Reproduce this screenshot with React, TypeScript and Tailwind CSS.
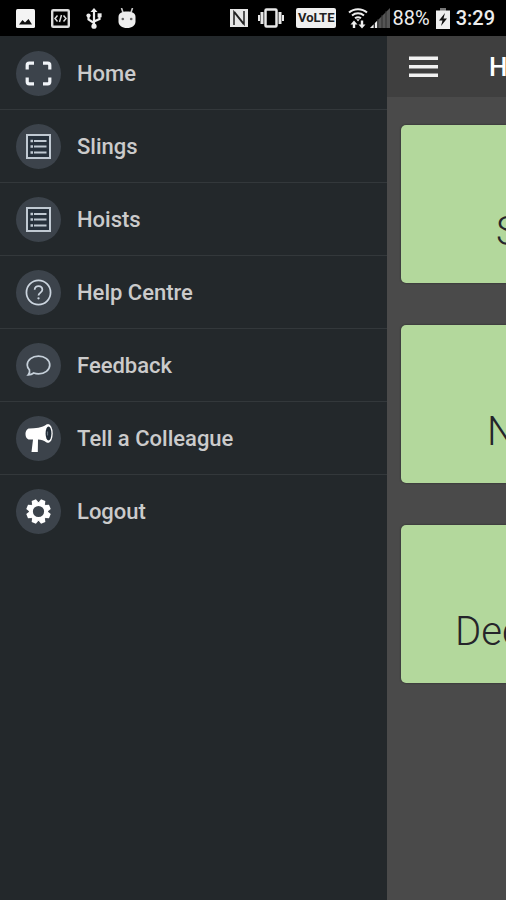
import type { ReactNode } from 'react';

const menuItems: { label: string; icon: ReactNode }[] = [
  { label: 'Home', icon: <ExpandIcon /> },
  { label: 'Slings', icon: <ListIcon /> },
  { label: 'Hoists', icon: <ListIcon /> },
  { label: 'Help Centre', icon: <HelpIcon /> },
  { label: 'Feedback', icon: <BubbleIcon /> },
  { label: 'Tell a Colleague', icon: <MegaphoneIcon /> },
  { label: 'Logout', icon: <GearIcon /> },
];

const tiles = [
  { label: 'S', indent: 'pl-[95px]' },
  { label: 'N', indent: 'pl-[86px]' },
  { label: 'Dec', indent: 'pl-[54px]' },
];

export default function App() {
  return (
    <div className="flex min-h-screen flex-col overflow-hidden bg-[#4a4a4a] font-[Roboto,sans-serif]">
      <StatusBar />
      <div className="flex flex-1">
        <nav className="w-[387px] shrink-0 bg-[#23282b] pt-px">
          <ul>
            {menuItems.map((item) => (
              <li key={item.label} className="border-b border-[#33383b] last:border-b-0">
                <a href="#" className="flex h-[72px] items-center gap-4 px-4">
                  <span className="flex size-[45px] shrink-0 items-center justify-center rounded-full bg-[#3c434b]">
                    {item.icon}
                  </span>
                  <span className="pt-px text-[22px] leading-7 font-medium text-[#cbcbcb]">{item.label}</span>
                </a>
              </li>
            ))}
          </ul>
        </nav>

        <div className="min-w-0 flex-1 overflow-hidden">
          <header className="flex h-[61px] items-center gap-[51px] bg-[#3f3f3f] pl-[22px]">
            <button type="button" aria-label="Menu" className="shrink-0">
              <svg width="29" height="22" viewBox="0 0 29 22" fill="#f2f2f2">
                <rect y="0.5" width="29" height="3.5" />
                <rect y="9" width="29" height="3.5" />
                <rect y="17.5" width="29" height="3.5" />
              </svg>
            </button>
            <h1 className="text-[26px] leading-8 font-medium text-white">H</h1>
          </header>
          <main className="flex flex-col gap-[42px] pt-7 pl-[14px]">
            {tiles.map((tile) => (
              <button
                key={tile.label}
                type="button"
                className={`h-[158px] overflow-hidden rounded-l-[5px] bg-[#b3d89c] pt-[55px] text-left text-[40px] leading-[48px] font-light whitespace-nowrap text-[#25252a] shadow-[0_0_2px_#222] ${tile.indent}`}
              >
                {tile.label}
              </button>
            ))}
          </main>
        </div>
      </div>
    </div>
  );
}

function StatusBar() {
  return (
    <div className="flex h-9 items-center justify-between bg-black pr-[11px] pl-4 text-[20px] leading-6 text-[#ededed]">
      <div className="flex items-center gap-4">
        <svg width="19" height="19" viewBox="0 0 19 19">
          <rect width="19" height="19" rx="1.5" fill="#f4f4f4" />
          <path d="M3 15.500 6.500 11l2.500 2.500L12.500 10l3.500 5.500z" fill="#111" />
        </svg>
        <svg width="19" height="19" viewBox="0 0 19 19" fill="none" stroke="#dcdcdc">
          <rect x="1.200" y="1.200" width="16.600" height="16.600" rx="1" strokeWidth="2.400" />
          <path d="M6.500 6.500 4 9.500l2.500 3M12.500 6.500l2.500 3-2.500 3M10.500 6l-2 7" strokeWidth="1.500" />
        </svg>
        <svg width="16" height="21" viewBox="0 0 16 21" fill="none" stroke="#eee" strokeWidth="2.200">
          <path d="M8 3v15M2.500 8v3.500L8 15M13.500 8v3L8 13.500" />
          <path d="M8 0l3.500 4h-7z" fill="#eee" stroke="none" />
          <circle cx="8" cy="18.200" r="2.600" fill="#eee" stroke="none" />
          <circle cx="2.500" cy="7.500" r="2.100" fill="#eee" stroke="none" />
          <rect x="11.600" y="5.300" width="4" height="4" fill="#eee" stroke="none" />
        </svg>
        <svg width="18" height="21" viewBox="0 0 18 21" fill="#eee">
          <path d="M3.500 0l1.500 4.500M14.500 0 13 4.500" stroke="#ccc" strokeWidth="1.600" />
          <path d="M0.500 9C0.500 5 4 3.500 9 3.500S17.500 5 17.500 9v4.500c0 4-3.500 6.500-8.500 6.500S0.500 17.500 0.500 13.500z" />
          <circle cx="4.800" cy="11" r="1.300" fill="#666" />
          <circle cx="13.200" cy="11" r="1.300" fill="#666" />
        </svg>
      </div>

      <div className="flex items-center gap-[6px]">
        <div className="flex items-center gap-[2px]">
          <div className="flex items-center gap-3">
            <div className="flex items-center gap-[9px]">
              <svg width="20" height="20" viewBox="0 0 20 20">
                <path d="M1 1h18v18H1z" fill="#e6e6e6" />
                <path d="M5 17V4L14.500 16M15 3v13L5.500 4" fill="none" stroke="#222" strokeWidth="1.500" />
              </svg>
              <svg width="26" height="20" viewBox="0 0 26 20" fill="none" stroke="#e8e8e8">
                <rect x="7.500" y="1.500" width="11" height="17" rx="1" strokeWidth="2.500" />
                <path d="M4 4v12M22 4v12" strokeWidth="3" />
                <path d="M1 7v6M25 7v6" strokeWidth="2" />
              </svg>
            </div>
            <span className="rounded-[2px] bg-[#f0f0f0] px-[2px] text-[13px] leading-5 font-bold text-[#222]">
              VoLTE
            </span>
            <div className="flex items-center gap-[2px]">
              <svg width="20" height="21" viewBox="0 0 20 21" fill="none" stroke="#eee" strokeWidth="2">
                <path d="M1 4.500c5-4.500 13-4.500 18 0M4 7.500c3.500-3 8.500-3 12 0M7 10.300c2-1.500 4-1.500 6 0" />
                <path d="M10 13.500 8.200 11.200h3.600z" fill="#eee" stroke="none" />
                <path d="M2.500 16.500 6 12.500l3.500 4H7.200V20H4.800v-3.500zM10.500 16.500h2.300v-4h2.400v4h2.300L14 20.500z" fill="#eee" stroke="none" />
              </svg>
              <svg width="20" height="20" viewBox="0 0 20 20">
                <path d="M0 20 20 0v20z" fill="#555" />
                <path d="M0 20l3.500-3.500V20zM5 15l2-2v7H5z" fill="#eee" />
                <path d="M4.500 15v5M8 11v9M12 7v13M16 3v17" stroke="#303030" strokeWidth="1" />
              </svg>
            </div>
          </div>
          <span>88%</span>
        </div>
        <svg width="14" height="21" viewBox="0 0 14 21">
          <path d="M4 0h6v2.500h4V21H0V2.500h4z" fill="#eee" />
          <path d="M4 0h6v2.500H4z" fill="#777" />
          <path d="M9 5 3 12.500h3.500L5 18l6-7.500H7.500z" fill="#111" />
        </svg>
        <span className="font-medium">3:29</span>
      </div>
    </div>
  );
}

function ExpandIcon() {
  return (
    <svg width="27" height="25" viewBox="0 0 27 25" fill="none" stroke="#f1f4f8" strokeWidth="3.200">
      <path d="M2.200 8.500V4.200q0-2 2-2H9M18 2.200h4.800q2 0 2 2v4.300M24.800 16.500v4.300q0 2-2 2H18M9 22.800H4.200q-2 0-2-2v-4.300" />
    </svg>
  );
}

function ListIcon() {
  return (
    <svg width="25" height="25" viewBox="0 0 25 25" fill="none" stroke="#c0c9d2">
      <rect x="1" y="1" width="23" height="23" fill="#27313c" strokeWidth="2" />
      <path d="M8 7h12.500M8 12.500h12.500M8 18.500h12.500" strokeWidth="2" />
      <path d="M4.500 7h2.500M4.500 12.500h2.500M4.500 18.500h2.500" strokeWidth="2.400" />
    </svg>
  );
}

function HelpIcon() {
  return (
    <svg width="27" height="27" viewBox="0 0 28 28" fill="none" stroke="#ccd5df" strokeWidth="1.800">
      <circle cx="14" cy="14" r="12.500" />
      <path d="M10 11.200c0-5.200 8-5.200 8 0 0 2.800-4 3-4 6" />
      <circle cx="14" cy="20" r="1.200" fill="#ccd5df" stroke="none" />
    </svg>
  );
}

function BubbleIcon() {
  return (
    <svg width="25" height="21" viewBox="0 0 26 22" fill="none" stroke="#c6d0da" strokeWidth="1.800">
      <path d="M3.500 15.500C2 14 1.200 12.500 1.200 10.500 1.200 5.200 6.500 1.200 13 1.200s11.800 4 11.800 9.300-5.300 9.300-11.800 9.300c-1.900 0-3.500-.3-5-.9-1.600 1.300-3.500 1.900-5.700 1.900C3.500 19.500 4 17.500 3.500 15.500z" />
    </svg>
  );
}

function MegaphoneIcon() {
  return (
    <svg width="28" height="28" viewBox="0 0 28 28" fill="#fff">
      <path d="M4.500 4.500C10 4.500 17 3.500 22 0.500v18c-3-2-6-2.800-9-3L12.800 28H6.500L8 15.500H4.500C2 15.500 0.500 13 0.500 10s1.500-5.500 4-5.500z" />
      <ellipse cx="23" cy="9.500" rx="4.700" ry="9.400" />
      <ellipse cx="23.500" cy="9.500" rx="2.900" ry="7" fill="#222d38" />
      <path d="M22.500 7.500v4" stroke="#66727e" strokeWidth="1.200" />
    </svg>
  );
}

function GearIcon() {
  const angles = [22.5, 67.5, 112.5, 157.5, 202.5, 247.5, 292.5, 337.5];
  return (
    <svg width="25" height="25" viewBox="-12.500 -12.500 25 25" fill="#fff">
      <circle r="7.600" fill="none" stroke="#fff" strokeWidth="4" />
      {angles.map((angle) => (
        <path key={angle} d="M-3.400-8.500-2.300-12.300h4.600L3.400-8.500z" transform={`rotate(${angle})`} />
      ))}
    </svg>
  );
}
